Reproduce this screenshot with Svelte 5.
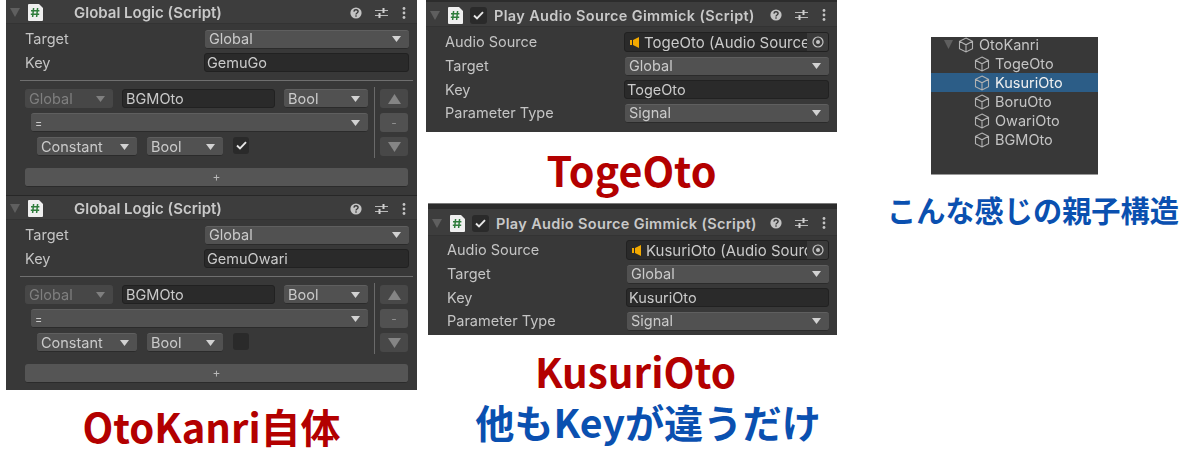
<script>
  const logics = [
    { key: 'GemuGo', checked: true },
    { key: 'GemuOwari', checked: false }
  ];
  const tree = ['TogeOto', 'KusuriOto', 'BoruOto', 'OwariOto', 'BGMOto'];
</script>

{#snippet dropdown(text, cls = '')}
  <div class="dd {cls}">
    <span class="dd-text">{text}</span>
    <svg class="dd-arrow" width="9" height="6" viewBox="0 0 9 6"><path d="M0 0h9L4.5 6z" fill="currentColor" /></svg>
  </div>
{/snippet}

{#snippet header(title, toggle)}
  <div class="head">
    <svg class="fold" width="10" height="9" viewBox="0 0 10 9"><path d="M0 0h10L5 9z" fill="#5f5f5f" /></svg>
    <svg class="file" width="15" height="17" viewBox="0 0 15 17">
      <path d="M1 0h10l4 4v12a1 1 0 0 1-1 1H1a1 1 0 0 1-1-1V1a1 1 0 0 1 1-1z" fill="#efefef" />
      <path d="M5.6 4 4.6 13M9.6 4l-1 9M3 6.8h8.4M2.8 10.2h8.4" stroke="#2f7d3c" stroke-width="1.5" fill="none" />
    </svg>
    {#if toggle}
      <span class="toggle">
        <svg width="11" height="9" viewBox="0 0 11 9"><path d="M1 4.5 4 7.5 10 1.2" stroke="#e6e6e6" stroke-width="1.9" fill="none" /></svg>
      </span>
    {/if}
    <span class="title" class:tight={toggle}>{title}</span>
    <svg class="help" width="12" height="12" viewBox="0 0 12 12">
      <circle cx="6" cy="6" r="5.6" fill="#c4c4c4" />
      <path d="M3.9 4.6C4 3.4 4.9 2.8 6 2.8s2.1.7 2.1 1.8C8.1 6 6 6 6 7.4" stroke="#383838" stroke-width="1.4" fill="none" />
      <rect x="5.3" y="8.3" width="1.4" height="1.4" fill="#383838" />
    </svg>
    <svg class="tune" width="13" height="12" viewBox="0 0 13 12">
      <path d="M0 3.5h13M0 8.5h13" stroke="#b8b8b8" stroke-width="1" />
      <path d="M8.5 1v5M4.5 6v5" stroke="#d0d0d0" stroke-width="2" />
    </svg>
    <svg class="dots" width="4" height="12" viewBox="0 0 4 12">
      <circle cx="2" cy="1.5" r="1.4" fill="#c4c4c4" /><circle cx="2" cy="6" r="1.4" fill="#c4c4c4" /><circle cx="2" cy="10.5" r="1.4" fill="#c4c4c4" />
    </svg>
  </div>
{/snippet}

{#snippet gimmick(name, cls)}
  <section class="panel gimmick {cls}">
    {@render header('Play Audio Source Gimmick (Script)', true)}
    <div class="fields">
      <div class="row audio">
        <span class="label">Audio Source</span>
        <div class="object">
          <svg class="speaker" width="10" height="11" viewBox="0 0 10 11"><path d="M0 3h2v5H0zM3 3l6-3v11L3 8z" fill="#f2a900" /></svg>
          <span class="object-text">{name} (Audio Source)</span>
          <span class="picker">
            <svg width="12" height="12" viewBox="0 0 12 12"><circle cx="6" cy="6" r="5" stroke="#c4c4c4" stroke-width="1.2" fill="none" /><circle cx="6" cy="6" r="2" fill="#c4c4c4" /></svg>
          </span>
        </div>
      </div>
      <div class="row"><span class="label">Target</span>{@render dropdown('Global', 'grow')}</div>
      <div class="row keyrow"><span class="label">Key</span><div class="input grow">{name}</div></div>
      <div class="row"><span class="label">Parameter Type</span>{@render dropdown('Signal', 'grow')}</div>
    </div>
  </section>
{/snippet}

{#snippet cube()}
  <svg class="cube" width="16" height="16" viewBox="0 0 16 16">
    <path d="M8 1 14.5 4.3V11.7L8 15 1.5 11.7V4.3zM1.5 4.3 8 7.8 14.5 4.3M8 7.8V15" fill="none" stroke="#b2b2b2" stroke-width="1.1" />
  </svg>
{/snippet}

<div class="page">
  <div class="col col-a">
    <div class="panel logic-panel">
      {#each logics as item, i}
        <section class="logic" class:first={i === 0}>
          {@render header('Global Logic (Script)', false)}
          <div class="row target"><span class="label">Target</span>{@render dropdown('Global', 'grow')}</div>
          <div class="row key"><span class="label">Key</span><div class="input grow">{item.key}</div></div>
          <div class="rule"></div>
          <div class="cond">
            <div class="cond-rows">
              <div class="cr">
                {@render dropdown('Global', 'w88 disabled')}
                <div class="input name">BGMOto</div>
                {@render dropdown('Bool', 'w84')}
              </div>
              <div class="cr in1">{@render dropdown('=', 'grow small')}</div>
              <div class="cr in2">
                {@render dropdown('Constant', 'w100')}
                {@render dropdown('Bool', 'w76')}
                <span class="check">
                  {#if item.checked}
                    <svg width="11" height="9" viewBox="0 0 11 9"><path d="M1 4.5 4 7.5 10 1.2" stroke="#e6e6e6" stroke-width="1.9" fill="none" /></svg>
                  {/if}
                </span>
              </div>
            </div>
            <div class="vline"></div>
            <div class="sort">
              <span class="sbtn"><svg width="13" height="10" viewBox="0 0 13 10"><path d="M6.5 0 13 10H0z" fill="#858585" /></svg></span>
              <span class="sbtn mid">-</span>
              <span class="sbtn"><svg width="13" height="10" viewBox="0 0 13 10"><path d="M0 0h13L6.5 10z" fill="#858585" /></svg></span>
            </div>
          </div>
          <div class="add">+</div>
        </section>
      {/each}
    </div>
    <h2 class="cap red cap-a">OtoKanri自体</h2>
  </div>

  <div class="col col-b">
    {@render gimmick('TogeOto', 'g1')}
    <h2 class="cap red cap-b">TogeOto</h2>
    {@render gimmick('KusuriOto', 'g2')}
    <h2 class="cap red cap-c">KusuriOto</h2>
    <h2 class="cap blue cap-d">他もKeyが違うだけ</h2>
  </div>

  <div class="col col-c">
    <div class="tree">
      <div class="node root">
        <svg class="fold" width="9" height="9" viewBox="0 0 9 9"><path d="M0 0h9L4.5 9z" fill="#5f5f5f" /></svg>
        {@render cube()}
        <span>OtoKanri</span>
      </div>
      {#each tree as name}
        <div class="node child" class:sel={name === 'KusuriOto'}>
          {@render cube()}
          <span>{name}</span>
        </div>
      {/each}
    </div>
    <h2 class="cap blue cap-e">こんな感じの親子構造</h2>
  </div>
</div>

<style>
  :global(body) { margin: 0; background: #fff; }
  .page {
    display: flex; width: 1200px; height: 473px; overflow: hidden; background: #fff;
    font-family: Inter, "Noto Sans CJK JP", sans-serif; color: #c4c4c4; font-size: 14.5px;
  }
  .col { display: flex; flex-direction: column; flex: none; }
  .col-a { width: 411px; margin-left: 6px; }
  .col-b { width: 411px; margin-left: 9px; }
  .col-c { width: 167px; margin-left: 94px; padding-top: 37px; }

  .panel { background: #383838; filter: blur(.35px); }
  .logic-panel { height: 390px; }
  .logic { padding-bottom: 8px; border-bottom: 1px solid #272727; }
  .logic:last-child { border-bottom: 0; }

  .head {
    display: flex; align-items: center; height: 24px; box-sizing: border-box;
    background: #3d3d3d; border-bottom: 1px solid #333; padding: 2px 11px 0 4px;
  }
  .fold { flex: none; }
  .file { margin-left: 8px; flex: none; }
  .title { margin-left: 31px; font-weight: 600; font-size: 15px; color: #c9c9c9; white-space: nowrap; }
  .title.tight { margin-left: 7px; font-size: 14.5px; letter-spacing: .35px; }
  .help { margin-left: auto; flex: none; }
  .tune { margin-left: 13px; flex: none; }
  .dots { margin-left: 14px; flex: none; }
  .toggle {
    display: flex; align-items: center; justify-content: center; flex: none;
    width: 17px; height: 17px; margin-left: 7px; border-radius: 3px; background: #2a2a2a;
  }

  .row { display: flex; align-items: stretch; height: 19px; padding: 0 8px 0 19px; }
  .target { margin-top: 6px; }
  .key { margin-top: 4px; }
  .key .label { line-height: 20px; }
  .label { width: 180px; flex: none; line-height: 18px; white-space: nowrap; }
  .audio .label, .keyrow .label { line-height: 19px; }
  .grow { flex: 1; min-width: 0; }

  .dd {
    display: flex; align-items: center; box-sizing: border-box; padding: 0 8px 2px 4px;
    background: #515151; border-radius: 3px; border-bottom: 1px solid #2b2b2b; border-top: 1px solid #5f5f5f;
    color: #cacaca; flex: none;
  }
  .cr .dd { padding-bottom: 0; }
  .dd.grow { flex: 1; }
  .dd-text { flex: 1; white-space: nowrap; }
  .dd-arrow { color: #d2d2d2; flex: none; }
  .dd.disabled { background: #474747; border-color: #474747; color: #7f7f7f; }
  .dd.disabled .dd-arrow { color: #7f7f7f; }
  .dd.small { font-size: 11px; }
  .w88 { width: 88px; }
  .w84 { width: 84px; }
  .w100 { width: 100px; }
  .w76 { width: 76px; }

  .input {
    box-sizing: border-box; padding: 0 2px; background: #2a2a2a; border-radius: 3px;
    border: 1px solid #212121; color: #cacaca; line-height: 17px; white-space: nowrap;
  }
  .row .input.grow { margin-left: -1px; }
  .rule { height: 1px; background: #6f6f6f; margin: 8px 4px 0 14px; }

  .cond { display: flex; height: 71px; margin: 6px 0 0 19px; padding-right: 9px; }
  .cond-rows { width: 343px; flex: none; display: flex; flex-direction: column; gap: 5px; padding-top: 2px; }
  .cr { display: flex; height: 19px; align-items: stretch; }
  .cr .input.name { width: 153px; margin: 0 9px; flex: none; padding: 0 3px; }
  .in1 { padding-left: 6px; }
  .in2 { padding-left: 12px; gap: 10px; }
  .check {
    display: flex; align-items: center; justify-content: center; width: 16px; height: 17px;
    background: #2a2a2a; border-radius: 3px;
  }
  .vline { width: 1px; height: 71px; background: #6a6a6a; margin-left: 6px; flex: none; }
  .sort { width: 28px; margin-left: 5px; display: flex; flex-direction: column; gap: 5px; padding-top: 2px; }
  .sbtn {
    display: flex; align-items: center; justify-content: center; height: 19px;
    background: #484848; border-radius: 3px; color: #8f8f8f; font-size: 12px;
  }
  .sbtn.mid { background: #515151; }
  .add {
    height: 19px; margin: 10px 9px 0 19px; box-sizing: border-box; background: #555; border-radius: 3px;
    border-bottom: 1px solid #2b2b2b; text-align: center; font-size: 12px; line-height: 18px; color: #b8b8b8;
  }

  .gimmick { height: 132px; border-top: 2px solid #2c2c2c; box-sizing: border-box; }
  .gimmick .head { height: 25px; }
  .fields { display: flex; flex-direction: column; gap: 5px; padding-top: 5px; }
  .audio { height: 20px; }
  .keyrow { margin-top: -1px; }
  .object {
    flex: 1; min-width: 0; display: flex; align-items: center; box-sizing: border-box; padding-left: 5px; margin-left: -1px;
    background: #2a2a2a; border: 1px solid #212121; border-radius: 3px; color: #cacaca; overflow: hidden;
  }
  .speaker { flex: none; margin-right: 4px; }
  .object-text { white-space: nowrap; overflow: hidden; flex: 1; font-size: 15px; }
  .picker {
    flex: none; width: 21px; height: 100%; background: #3a3a3a; display: flex; align-items: center; justify-content: center;
  }

  .g2 { margin-left: 2px; width: 409px; height: 131px; border-top: 5px solid #2c2c2c; box-shadow: 0 -1px #7a7a7a; }
  .g2 .head { height: 27px; }
  .g2 .fields { padding-top: 4px; }

  .cap { margin: 0; font-family: "Noto Sans CJK JP", sans-serif; font-weight: 700; text-align: center; font-size: 40px; line-height: 44px; white-space: nowrap; }
  .red { color: #b30000; }
  .blue { color: #0a50b0; }
  .cap-a { margin-top: 14px; }
  .cap-b { margin-top: 15px; margin-bottom: 13px; font-size: 41.2px; }
  .cap-c { margin-top: 14px; margin-left: 8px; font-size: 40.4px; }
  .cap-d { margin-top: 6px; margin-left: 33px; font-size: 39.2px; }
  .cap-e { font-size: 29.2px; line-height: 40px; margin-top: 14px; margin-left: -53px; width: 310px; }

  .tree { width: 167px; height: 138px; background: #383838; box-sizing: border-box; border-bottom: 1px solid #999; filter: blur(.35px); }
  .node { display: flex; align-items: center; height: 19px; font-size: 14.5px; color: #c4c4c4; }
  .root { padding-left: 13px; margin-top: -2px; }
  .root .cube { margin-left: 5px; margin-right: 5px; }
  .child { padding-left: 43px; }
  .child .cube { margin-right: 5px; }
  .sel { background: #2c5d87; color: #f0f0f0; }
</style>
